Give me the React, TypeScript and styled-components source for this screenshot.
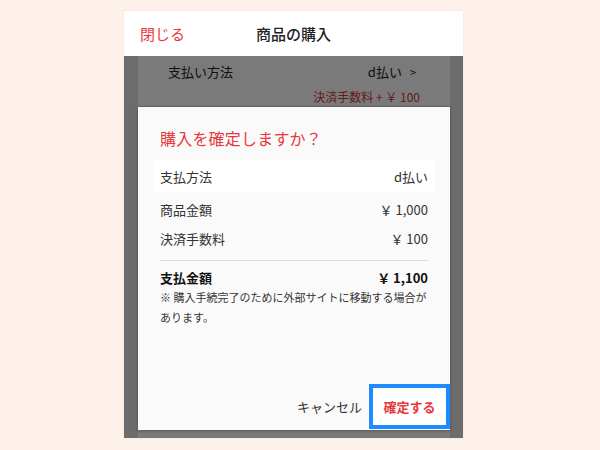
import React from 'react'
import styled, { createGlobalStyle } from 'styled-components'

const GlobalStyle = createGlobalStyle`
  html, body {
    margin: 0;
    padding: 0;
    background: #fdf1e9;
  }
  body {
    font-family: "Noto Sans CJK JP", "Noto Sans", sans-serif;
    color: #333;
  }
`

const Page = styled.div`
  width: 600px;
  height: 450px;
  display: flex;
  padding: 11px 0 0 124px;
  box-sizing: border-box;
`

const Phone = styled.div`
  width: 339px;
  height: 427px;
  display: flex;
  flex-direction: column;
  box-shadow: 0 0 2px rgba(0, 0, 0, 0.08);
`

const Header = styled.div`
  height: 45px;
  flex-shrink: 0;
  background: #fff;
  display: grid;
  grid-template-columns: 1fr auto 1fr;
  align-items: center;
  padding: 0 16px;
  font-size: 15px;
`

const CloseLink = styled.span`
  color: #e8383d;
`

const HeaderTitle = styled.span`
  color: #222;
  font-weight: 500;
`

const Body = styled.div`
  position: relative;
  flex: 1;
  background: #d8d8d8;
  display: flex;
  justify-content: center;
`

const Sheet = styled.div`
  width: 312px;
  margin-left: 1px;
  background: #f4f4f4;
`

const SheetRow = styled.div`
  display: flex;
  justify-content: space-between;
  align-items: center;
  height: 30px;
  padding: 0 34px 0 30px;
  font-size: 13px;
  color: #222;
`

const Chevron = styled.span`
  margin-left: 8px;
  font-size: 11px;
`

const FeeLine = styled.div`
  text-align: right;
  padding: 2px 30px 0 0;
  height: 18px;
  font-size: 12px;
  color: #d0363b;
  border-bottom: 1px solid #c8c8c8;
`

const Overlay = styled.div`
  position: absolute;
  inset: 0;
  background: rgba(0, 0, 0, 0.5);
  display: flex;
  padding: 51px 13px 8px 14px;
  box-sizing: border-box;
`

const Dialog = styled.div`
  flex: 1;
  background: #fafafa;
  display: flex;
  flex-direction: column;
  padding: 0 15px 0 15px;
  box-shadow: 0 1px 3px rgba(0, 0, 0, 0.3);
`

const DialogTitle = styled.div`
  color: #e8383d;
  font-size: 16px;
  letter-spacing: 0.2px;
  padding: 19px 0 0 7px;
  height: 34px;
`

const Line = styled.div<{ $highlight?: boolean; $bold?: boolean }>`
  display: flex;
  justify-content: space-between;
  align-items: center;
  height: ${p => (p.$highlight ? '32px' : '29px')};
  padding: 0 7px;
  background: ${p => (p.$highlight ? '#fff' : 'transparent')};
  font-size: 13px;
  font-weight: ${p => (p.$bold ? 700 : 400)};
  color: ${p => (p.$bold ? '#111' : '#333')};
`

const Amounts = styled.div`
  padding-top: 3px;
`

const Divider = styled.div`
  height: 1px;
  background: #ddd;
  margin: 7px 7px 2px;
`

const Note = styled.div`
  font-size: 11px;
  line-height: 20px;
  color: #333;
  padding: 0 7px;
  margin-top: -5px;
`

const Actions = styled.div`
  margin-top: auto;
  display: flex;
  justify-content: flex-end;
  align-items: center;
  margin-right: -15px;
  gap: 7px;
`

const TextButton = styled.button<{ $primary?: boolean }>`
  font-family: inherit;
  font-size: 13px;
  border: ${p => (p.$primary ? '4px solid #1e8cff' : 'none')};
  background: ${p => (p.$primary ? '#fff' : 'transparent')};
  color: ${p => (p.$primary ? '#e8383d' : '#333')};
  font-weight: ${p => (p.$primary ? 700 : 400)};
  height: 45px;
  padding: ${p => (p.$primary ? '0 10px' : '0')};
  width: ${p => (p.$primary ? '81px' : 'auto')};
  margin-bottom: 1px;
`

export default function App() {
  return (
    <>
      <GlobalStyle />
      <Page>
        <Phone>
          <Header>
            <CloseLink>閉じる</CloseLink>
            <HeaderTitle>商品の購入</HeaderTitle>
            <span />
          </Header>
          <Body>
            <Sheet>
              <SheetRow>
                <span>支払い方法</span>
                <span>
                  d払い<Chevron>&gt;</Chevron>
                </span>
              </SheetRow>
              <FeeLine>決済手数料 + ￥ 100</FeeLine>
            </Sheet>
            <Overlay>
              <Dialog>
                <DialogTitle>購入を確定しますか？</DialogTitle>
                <Line $highlight>
                  <span>支払方法</span>
                  <span>d払い</span>
                </Line>
                <Amounts>
                  <Line>
                    <span>商品金額</span>
                    <span>￥ 1,000</span>
                  </Line>
                  <Line>
                    <span>決済手数料</span>
                    <span>￥ 100</span>
                  </Line>
                </Amounts>
                <Divider />
                <Line $bold>
                  <span>支払金額</span>
                  <span>￥ 1,100</span>
                </Line>
                <Note>※ 購入手続完了のために外部サイトに移動する場合があります。</Note>
                <Actions>
                  <TextButton>キャンセル</TextButton>
                  <TextButton $primary>確定する</TextButton>
                </Actions>
              </Dialog>
            </Overlay>
          </Body>
        </Phone>
      </Page>
    </>
  )
}
